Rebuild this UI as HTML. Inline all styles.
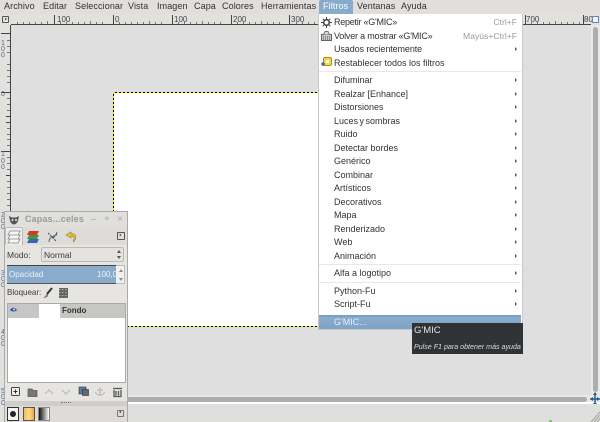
<!DOCTYPE html>
<html lang="es"><head><meta charset="utf-8"><title>GIMP</title>
<style>
html,body{margin:0;padding:0}
body{width:600px;height:422px;overflow:hidden;position:relative;background:#dfdfdf;font-family:"Liberation Sans",sans-serif;font-size:9px;color:#3c3b37}
div,span{position:absolute;white-space:nowrap}
.m{top:0;height:14px;line-height:13px;font-size:9px;letter-spacing:.1px;color:#33322e}
.i{left:334px;font-size:9px;line-height:12px;height:12px;color:#33322e;letter-spacing:0}
.k{font-size:8.600px;color:#9a9a9a;letter-spacing:0;right:83px;left:auto}
.a{left:515px;width:0;height:0;border-left:2.500px solid #555;border-top:2px solid transparent;border-bottom:2px solid transparent}
.s{left:319px;width:202px;height:1px;background:#e8e8e8}
.r{font-size:8px;line-height:9px;color:#444;top:15px}
.v{font-size:7px;line-height:6px;white-space:normal;width:6px;color:#4d6d8a;left:1px}
</style></head><body>
<div style="left:0;top:0;width:600px;height:14px;background:#e0dfdc"></div>
<div class="m" style="left:4px">Archivo</div>
<div class="m" style="left:43px">Editar</div>
<div class="m" style="left:75px">Seleccionar</div>
<div class="m" style="left:128px">Vista</div>
<div class="m" style="left:157px">Imagen</div>
<div class="m" style="left:194px">Capa</div>
<div class="m" style="left:222px">Colores</div>
<div class="m" style="left:261px">Herramientas</div>
<div style="left:319px;top:0;width:34px;height:14px;background:#88abcb;border-radius:2px 2px 0 0"></div>
<div class="m" style="left:323px;color:#fff">Filtros</div>
<div class="m" style="left:357px">Ventanas</div>
<div class="m" style="left:401px">Ayuda</div>

<!-- rulers -->
<div style="left:0;top:14px;width:600px;height:11px;background:#e2e1de"></div>
<div style="left:11px;top:24px;width:580px;height:1px;background:#444"></div>
<div style="left:2px;top:16px;width:5px;height:5px;border:1px solid #555;border-radius:1px"></div>
<div style="left:5px;top:18px;width:0;height:0;border-left:2px solid #333;border-top:1.500px solid transparent;border-bottom:1.500px solid transparent"></div>
<svg style="position:absolute;left:0;top:14px" width="600" height="11"><path stroke="#777" stroke-width="1" fill="none" d="M17.500 8V10M23.500 8V10M29.500 8V10M35.500 8V10M41.500 8V10M47.500 7V10M60.500 8V10M66.500 8V10M72.500 8V10M78.500 8V10M84.500 8V10M90.500 7V10M96.500 8V10M102.500 8V10M119.500 8V10M125.500 8V10M131.500 8V10M137.500 8V10M143.500 8V10M149.500 7V10M155.500 8V10M161.500 8V10M178.500 8V10M184.500 8V10M190.500 8V10M196.500 8V10M202.500 7V10M208.500 8V10M214.500 8V10M220.500 8V10M237.500 8V10M243.500 8V10M249.500 8V10M255.500 8V10M261.500 7V10M267.500 8V10M273.500 8V10M279.500 8V10M296.500 8V10M302.500 8V10M308.500 8V10M314.500 8V10M531.500 8V10M537.500 8V10M543.500 8V10M549.500 8V10M555.500 7V10M561.500 8V10M567.500 8V10M573.500 8V10M579.500 8V10"/><path stroke="#444" stroke-width="1" fill="none" d="M54.500 1V10M113.500 1V10M172.500 1V10M231.500 1V10M289.500 1V10M525.500 1V10M583.500 1V10"/></svg>
<div class="r" style="left:57px">100</div>
<div class="r" style="left:115px">0</div>
<div class="r" style="left:174px">100</div>
<div class="r" style="left:233px">200</div>
<div class="r" style="left:291px">300</div>
<div class="r" style="left:526px">700</div>
<div class="r" style="left:584px;width:9px;overflow:hidden">80</div>
<div style="left:592px;top:16px;width:5px;height:5px;border:1px solid #6a8aa8;background:#eef"></div>

<div style="left:0;top:25px;width:11px;height:397px;background:#e2e1de"></div>
<div style="left:10px;top:25px;width:1px;height:397px;background:#444"></div>
<svg style="position:absolute;left:0;top:25px" width="11" height="190"><path stroke="#777" fill="none" d="M7 15.500H10M7 21.500H10M7 27.500H10M7 39.500H10M7 45.500H10M7 51.500H10M7 57.500H10M7 73.500H10M7 79.500H10M7 85.500H10M7 103.500H10M7 109.500H10M7 114.500H10M7 120.500H10M7 132.500H10M7 138.500H10M7 144.500H10M7 156.500H10M7 162.500H10M7 168.500H10M7 174.500H10M7 180.500H10"/><path stroke="#444" fill="none" d="M6 91.500H10M6 97.500H10M6 150.500H10M1 8.500H10M1 67.500H10M1 126.500H10"/></svg>
<div class="v" style="top:41px">1<br>0<br>0</div>
<div class="v" style="top:92px">0</div>
<div class="v" style="top:152px;line-height:6.500px">1<br>0<br>0</div>
<div class="v" style="top:213px">2<br>0<br>0</div>
<div class="v" style="top:271px">3<br>0<br>0</div>
<div class="v" style="top:330px">4<br>0<br>0</div>
<div class="v" style="top:389px">5<br>0<br>0</div>

<!-- canvas image -->
<div style="left:113px;top:92px;width:207px;height:234px;background:#fff"></div>
<svg style="position:absolute;left:113px;top:92px" width="207" height="235"><path d="M0 .5H207M.5 0V235M0 234.500H207" stroke="#000" fill="none"/><path d="M0 .5H207M.5 0V235M0 234.500H207" stroke="#f4e800" fill="none" stroke-dasharray="2 2"/></svg>

<!-- scrollbars -->
<div style="left:591px;top:25px;width:9px;height:376px;background:#e9e9e9"></div>
<div style="left:593px;top:27px;width:5px;height:365px;background:#adadad;border-radius:3px"></div>
<div style="left:128px;top:395px;width:463px;height:8px;background:#e9e9e9"></div>
<div style="left:128px;top:397px;width:459px;height:5px;background:#adadad;border-radius:0 3px 3px 0"></div>
<div style="left:128px;top:402px;width:472px;height:2px;background:#fff"></div>
<svg style="position:absolute;left:590px;top:392px" width="10" height="14"><path d="M5 1V13M0 7H10" stroke="#2a5a90" stroke-width="1.500"/><path d="M5 0L3 3H7ZM5 14L3 11H7ZM0 7L3 5V9ZM10 7L7 5V9Z" fill="#2a5a90"/></svg>
<div style="left:128px;top:404px;width:472px;height:18px;background:#dfdfdd"></div>
<svg style="position:absolute;left:590px;top:410px" width="10" height="12"><path d="M10 2L1 12M10 5L4 12M10 8L7 12" stroke="#a5a5a5"/></svg>
<div style="left:549px;top:420px;width:3px;height:2px;background:#8fbf6f"></div>

<!-- menu -->
<div style="left:318px;top:14px;width:203px;height:315px;background:#fff;border:1px solid #c8c8c8;border-top:0;box-sizing:content-box"></div>
<svg style="position:absolute;left:321px;top:17px" width="11" height="11"><circle cx="5.500" cy="5.500" r="2.800" fill="none" stroke="#444" stroke-width="1.600"/><path d="M5.500 0V11M0 5.500H11M1.700 1.700L9.300 9.300M9.300 1.700L1.700 9.300" stroke="#444" stroke-width="1" stroke-dasharray="2 7"/></svg>
<div class="i" style="top:16px;letter-spacing:-.25px">Repetir «G'MIC»</div>
<div class="i k" style="top:16px">Ctrl+F</div>
<svg style="position:absolute;left:321px;top:31px" width="11" height="10"><rect x="0.500" y="3.500" width="10" height="6" fill="#c9c9c9" stroke="#666"/><path d="M2.500 3.500L4 .5H7L8.500 3.500" fill="#ddd" stroke="#777"/><path d="M2 6H9M2 8H9" stroke="#555" stroke-dasharray="1 1"/></svg>
<div class="i" style="top:30px;letter-spacing:-.2px">Volver a mostrar «G'MIC»</div>
<div class="i k" style="top:30px">Mayús+Ctrl+F</div>
<div class="i" style="top:43px;letter-spacing:-.1px">Usados recientemente</div><div class="a" style="top:47px"></div>
<svg style="position:absolute;left:321px;top:57px" width="11" height="11"><rect x="2.500" y="0.500" width="8" height="8" rx="1.500" fill="#f2d84b" stroke="#a88d10"/><rect x="5" y="3" width="3" height="3" fill="#fff"/><path d="M0 7H4M2 5V9" stroke="#3a6ea8" stroke-width="1.500"/></svg>
<div class="i" style="top:57px">Restablecer todos los filtros</div>
<div class="s" style="top:71px"></div>
<div class="i" style="top:74px">Difuminar</div><div class="a" style="top:78px"></div>
<div class="i" style="top:88px">Realzar [Enhance]</div><div class="a" style="top:92px"></div>
<div class="i" style="top:101px">Distorsiones</div><div class="a" style="top:105px"></div>
<div class="i" style="top:115px;word-spacing:-1px">Luces y sombras</div><div class="a" style="top:119px"></div>
<div class="i" style="top:128px">Ruido</div><div class="a" style="top:132px"></div>
<div class="i" style="top:142px">Detectar bordes</div><div class="a" style="top:146px"></div>
<div class="i" style="top:155px">Genérico</div><div class="a" style="top:159px"></div>
<div class="i" style="top:169px">Combinar</div><div class="a" style="top:173px"></div>
<div class="i" style="top:182px">Artísticos</div><div class="a" style="top:186px"></div>
<div class="i" style="top:196px">Decorativos</div><div class="a" style="top:200px"></div>
<div class="i" style="top:209px">Mapa</div><div class="a" style="top:213px"></div>
<div class="i" style="top:223px">Renderizado</div><div class="a" style="top:227px"></div>
<div class="i" style="top:236px">Web</div><div class="a" style="top:240px"></div>
<div class="i" style="top:250px">Animación</div><div class="a" style="top:254px"></div>
<div class="s" style="top:264px"></div>
<div class="i" style="top:267px">Alfa a logotipo</div><div class="a" style="top:271px"></div>
<div class="s" style="top:282px"></div>
<div class="i" style="top:285px">Python-Fu</div><div class="a" style="top:289px"></div>
<div class="i" style="top:298px">Script-Fu</div><div class="a" style="top:302px"></div>
<div style="left:319px;top:315px;width:202px;height:14px;background:linear-gradient(#6f9ac1,#8aaccd 20%,#7fa3c6)"></div>
<div class="i" style="top:316px;color:#e8eef4">G'MIC...</div>

<!-- tooltip -->
<div style="left:412px;top:323px;width:111px;height:31px;background:#2f3336"></div>
<div style="left:414px;top:325px;line-height:12px;font-size:9.500px;color:#e4e4e4">G'MIC</div>
<div style="left:414px;top:342px;line-height:10px;font-size:7.100px;font-style:italic;color:#dcdcdc">Pulse F1 para obtener más ayuda</div>

<!-- dock -->
<div style="left:4px;top:211px;width:124px;height:211px;background:#e0dfdc;border:1px solid #aaa;box-sizing:border-box;border-bottom:0"></div>
<svg style="position:absolute;left:8px;top:214px" width="12" height="11"><path d="M1 2L4 3.500H8L11 2L10 6.500C9.500 9 7.500 10.500 6 10.500C4.500 10.500 2.500 9 2 6.500Z" fill="#555"/><circle cx="4.500" cy="6" r="1" fill="#eee"/><circle cx="8" cy="6" r="1" fill="#eee"/></svg>
<div style="left:25px;top:213px;font-size:9px;font-weight:bold;line-height:13px;color:#9a9a96;letter-spacing:.15px">Capas...celes</div>
<div style="left:91px;top:213px;font-size:10px;line-height:13px;color:#aaa">–</div>
<div style="left:104px;top:213px;font-size:10px;line-height:13px;color:#aaa">+</div>
<div style="left:117px;top:213px;font-size:10px;line-height:13px;color:#aaa">×</div>

<div style="left:5px;top:227px;width:122px;height:18px;background:#dddcd9"></div>
<div style="left:5px;top:227px;width:18px;height:18px;background:#eeedea;border-radius:2px 2px 0 0;border:1px solid #bbb;border-bottom:0;box-sizing:border-box"></div>
<svg style="position:absolute;left:7px;top:230px" width="14" height="14"><path d="M3 1H13L11 5H1ZM3 5H13L11 9H1ZM3 9H13L11 13H1Z" fill="#f6f6f6" stroke="#888" stroke-width=".8"/></svg>
<svg style="position:absolute;left:26px;top:230px" width="14" height="14"><path d="M3 1H13L11 5H1Z" fill="#d8382c"/><path d="M3 5H13L11 9H1Z" fill="#3e9a35"/><path d="M3 9H13L11 13H1Z" fill="#3a62b8"/></svg>
<svg style="position:absolute;left:46px;top:230px" width="14" height="14"><path d="M3 12C3 5 10 8 11 2" stroke="#4a6d8c" fill="none"/><path d="M2 3L6 7L10 11M11 4L7 8" stroke="#444" stroke-dasharray="2 1"/></svg>
<svg style="position:absolute;left:64px;top:230px" width="15" height="14"><path d="M7 2L2 5L7 8V6C10 6 11 8 9 12C13 9 13 3 7 4Z" fill="#e8c440" stroke="#9c8520" stroke-width=".7"/></svg>
<div style="left:117px;top:232px;width:6px;height:6px;border:1px solid #555;border-radius:1px"></div>
<div style="left:119px;top:234px;width:0;height:0;border-right:2px solid #333;border-top:1.500px solid transparent;border-bottom:1.500px solid transparent"></div>

<div style="left:5px;top:245px;width:122px;height:156px;background:#e6e5e2"></div>
<div style="left:7px;top:249px;line-height:12px;font-size:8.500px">Modo:</div>
<div style="left:41px;top:247px;width:83px;height:15px;background:#e4e3e0;border:1px solid #bcb9b3;border-radius:2px;box-sizing:border-box"></div>
<div style="left:44px;top:249px;line-height:12px;font-size:8.500px">Normal</div>
<div style="left:117px;top:250px;width:0;height:0;border-bottom:3px solid #555;border-left:2px solid transparent;border-right:2px solid transparent"></div>
<div style="left:117px;top:256px;width:0;height:0;border-top:3px solid #555;border-left:2px solid transparent;border-right:2px solid transparent"></div>

<div style="left:7px;top:265px;width:118px;height:19px;background:#f1f1f0;border:1px solid #bbb;box-sizing:border-box"></div>
<div style="left:7px;top:265px;width:109px;height:19px;background:#89abcc;border-top:1px solid #444;border-bottom:1px solid #555;box-sizing:border-box"></div>
<div style="left:9px;top:269px;line-height:11px;font-size:8px;color:#eef3f8">Opacidad</div>
<div style="left:97px;top:269px;line-height:11px;font-size:8px;color:#eef3f8">100,0</div>
<div style="left:119px;top:269px;width:0;height:0;border-bottom:3px solid #888;border-left:2px solid transparent;border-right:2px solid transparent"></div>
<div style="left:119px;top:278px;width:0;height:0;border-top:3px solid #888;border-left:2px solid transparent;border-right:2px solid transparent"></div>

<div style="left:7px;top:287px;line-height:12px;font-size:8px">Bloquear:</div>
<svg style="position:absolute;left:43px;top:287px" width="10" height="12"><path d="M9 1L4 7" stroke="#333" stroke-width="2"/><path d="M4 7L1 11L5 9Z" fill="#b89a5c" stroke="#555" stroke-width=".5"/></svg>
<svg style="position:absolute;left:59px;top:288px" width="9" height="10"><rect width="9" height="10" fill="#666"/><path d="M0 1.500H9M0 4.500H9M0 7.500H9" stroke="#aaa" stroke-dasharray="1.500 1.500"/></svg>

<div style="left:7px;top:303px;width:119px;height:80px;background:#fff;border:1px solid #aaa;box-sizing:border-box"></div>
<div style="left:8px;top:304px;width:117px;height:14px;background:#c6c6c4"></div>
<svg style="position:absolute;left:10px;top:307px" width="8" height="6"><path d="M0 3C2 0 5 0 7 3C5 5 2 5 0 3Z" fill="#2f5a96"/><circle cx="4" cy="2.500" r="1" fill="#dde"/></svg>
<div style="left:39px;top:304px;width:21px;height:14px;background:#fff"></div>
<div style="left:62px;top:305px;line-height:11px;font-size:8px;font-weight:bold;color:#333">Fondo</div>

<svg style="position:absolute;left:10px;top:386px" width="116" height="12"><rect x="1.500" y="1.500" width="8" height="8" rx="1" fill="#eee" stroke="#444"/><path d="M3.500 5.500H7.500M5.500 3.500V7.500" stroke="#333"/><path d="M18 3H22L23 4.500H27V10.500H18Z" fill="#777" stroke="#555" stroke-width=".7"/><path d="M35 8L39 4L43 8M52 4L56 8L60 4" stroke="#bbb" fill="none" stroke-width="1.200"/><rect x="69" y="1" width="7" height="7" fill="#5878a8" stroke="#333" stroke-width=".6"/><rect x="72.500" y="3.500" width="6" height="6" fill="#667" stroke="#333" stroke-width=".6"/><path d="M90 1.500V10M87 4H93M85.500 6C86 10 94 10 94.500 6" stroke="#bbb" fill="none" stroke-width="1.300"/><path d="M103 2.500H112M104 4V10.500H111V4M106 5V9.500M108.500 5V9.500" stroke="#555" fill="none" stroke-width="1.300"/></svg>

<div style="left:5px;top:401px;width:122px;height:5px;background:#cfcecb"></div>
<div style="left:61px;top:402px;width:10px;height:0;border-top:1px dotted #777"></div>
<div style="left:5px;top:406px;width:122px;height:16px;background:#dddcd9"></div>
<div style="left:7px;top:407px;width:12px;height:14px;background:#f2f2f2;border:1px solid #333;box-sizing:border-box"></div>
<div style="left:10px;top:411px;width:6px;height:6px;border-radius:3px;background:#222"></div>
<div style="left:23px;top:407px;width:12px;height:14px;background:linear-gradient(90deg,#f4c050,#fbd98b 50%,#f0a840);border:1px solid #555;box-sizing:border-box"></div>
<div style="left:38px;top:407px;width:12px;height:14px;background:linear-gradient(90deg,#111,#fff);border:1px solid #888;box-sizing:border-box"></div>
<div style="left:117px;top:410px;width:5px;height:5px;border:1px solid #777;border-radius:1px"></div>
<div style="left:119px;top:411px;width:0;height:0;border-right:2px solid #333;border-top:1.500px solid transparent;border-bottom:1.500px solid transparent"></div>
</body></html>
